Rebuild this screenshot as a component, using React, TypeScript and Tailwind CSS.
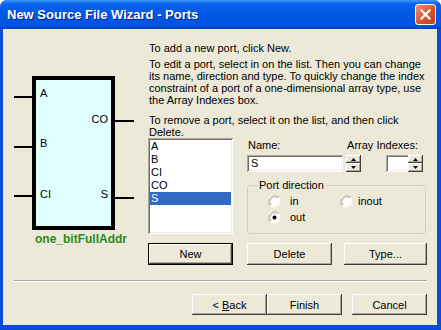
import React from 'react';

const raised = 'bg-[#ECE9D8] shadow-[inset_-1px_-1px_0_#404040,inset_1px_1px_0_#ffffff,inset_-2px_-2px_0_#aca899]';
const sunken = 'shadow-[inset_1px_1px_0_#aca899,inset_-1px_-1px_0_#ffffff,inset_2px_2px_0_#716f64,inset_-2px_-2px_0_#f1efe2]';

const Button: React.FC<{ w: string; h?: string; isDefault?: boolean; children: React.ReactNode }> = ({ w, h = 'h-[22px]', isDefault, children }) => (
  <div className={`${w} ${h} ${isDefault ? 'border border-black' : ''} flex`}>
    <div className={`flex-1 ${raised} flex items-center justify-center text-[11px] text-black`}>{children}</div>
  </div>
);

const Arrow = ({ up }: { up?: boolean }) => (
  <svg width="5" height="3" viewBox="0 0 5 3">
    <path d={up ? 'M2.5 0 L5 3 L0 3 Z' : 'M0 0 L5 0 L2.5 3 Z'} fill="#000" />
  </svg>
);

const Spin = () => (
  <div className="flex flex-col w-[15px] h-[17px]">
    <div className={`h-[8px] ${raised} flex items-center justify-center`}><Arrow up /></div>
    <div className={`h-[9px] ${raised} flex items-center justify-center`}><Arrow /></div>
  </div>
);

const Radio = ({ checked }: { checked?: boolean }) => (
  <svg width="13" height="13" viewBox="0 0 13 13">
    <circle cx="6.5" cy="6.5" r="6" fill="#fff" />
    <path d="M2.3 10.7 A6 6 0 0 1 10.7 2.3" stroke="#a0a0a0" strokeWidth="1" fill="none" />
    <path d="M3.2 9.8 A4.7 4.7 0 0 1 9.8 3.2" stroke="#d4d0c8" strokeWidth="1" fill="none" />
    <path d="M10.7 2.3 A6 6 0 0 1 2.3 10.7" stroke="#f4f3ee" strokeWidth="1" fill="none" />
    {checked && <circle cx="6.5" cy="6.5" r="2" fill="#000" />}
  </svg>
);

// schematic symbol of the entity
const Symbol = () => (
  <svg width="145" height="236" viewBox="0 0 145 236" className="shrink-0">
    <rect x="31" y="49" width="79" height="150" fill="#E0FFFF" stroke="#000" strokeWidth="4" />
    <g stroke="#000" strokeWidth="2">
      <line x1="11" y1="68" x2="29" y2="68" />
      <line x1="11" y1="118" x2="29" y2="118" />
      <line x1="11" y1="167" x2="29" y2="167" />
      <line x1="112" y1="92" x2="131" y2="92" />
      <line x1="112" y1="169" x2="131" y2="169" />
    </g>
    <g fontFamily="'Liberation Sans', Arial, sans-serif" fontSize="11" fill="#000">
      <text x="37" y="68">A</text>
      <text x="37" y="118">B</text>
      <text x="37" y="169">CI</text>
      <text x="105" y="94" textAnchor="end">CO</text>
      <text x="105" y="169" textAnchor="end">S</text>
    </g>
    <text x="32" y="214" fontFamily="'Liberation Sans', Arial, sans-serif" fontSize="12" fontWeight="bold" fill="#2A8A21">one_bitFullAddr</text>
  </svg>
);

export default function App() {
  const ports = ['A', 'B', 'CI', 'CO', 'S'];
  return (
    <div className="w-[441px] h-[330px] bg-[#0A4BD8] rounded-t-[7px] overflow-hidden flex flex-col font-['Liberation_Sans',Arial,sans-serif]">
      {/* Title bar */}
      <div className="h-[29px] shrink-0 flex items-center pl-[7px] pr-[5px] bg-[linear-gradient(to_bottom,#3D95FF_0%,#0A62EB_14%,#0058E6_50%,#0053DF_88%,#0040C8_100%)]">
        <span className="flex-1 text-white font-bold text-[13px] leading-none text-shadow-[1px_1px_0_#0a1e8c]">New Source File Wizard - Ports</span>
        <div className="w-[21px] h-[21px] rounded-[3px] border border-white bg-[linear-gradient(to_bottom_right,#F0906E,#D9532E_55%,#C23D1E)] flex items-center justify-center">
          <svg width="11" height="11" viewBox="0 0 11 11">
            <path d="M1.5 1.5 L9.5 9.5 M9.5 1.5 L1.5 9.5" stroke="#fff" strokeWidth="2.2" strokeLinecap="square" />
          </svg>
        </div>
      </div>

      {/* Body */}
      <div className="flex-1 ml-[3px] mr-[4px] mb-[5px] bg-[#ECE9D8] flex flex-col text-[11px] leading-[12px] text-black">
        <div className="flex">
          <Symbol />
          <div className="flex flex-col pt-[13px]">
            <div className="pl-[1px] whitespace-nowrap">
              <p>To add a new port, click New.</p>
              <p className="mt-[4px]">
                To edit a port, select in on the list. Then you can change<br />
                its name, direction and type. To quickly change the index<br />
                constraint of a port of a one-dimensional array type, use<br />
                the Array Indexes box.
              </p>
              <p className="mt-[8px]">
                To remove a port, select it on the list, and then click<br />
                Delete.
              </p>
            </div>

            <div className="flex gap-[14px]">
              {/* Port list */}
              <div className={`w-[85px] h-[96px] bg-white p-[2px] ${sunken}`}>
                {ports.map(p => (
                  <div key={p} className={`h-[13px] leading-[13px] pl-[1px] ${p === 'S' ? 'bg-[#316AC5] text-white' : ''}`}>{p}</div>
                ))}
              </div>

              {/* Port properties */}
              <div className="w-[180px] flex flex-col">
                <div className="flex justify-between pl-[1px] pr-[9px] mt-[1px]">
                  <span>Name:</span>
                  <span>Array Indexes:</span>
                </div>
                <div className="flex mt-[4px] h-[17px]">
                  <div className={`w-[96px] bg-white ${sunken} pl-[4px] leading-[17px]`}>S</div>
                  <div className="ml-[3px]"><Spin /></div>
                  <div className={`ml-[25px] w-[37px] bg-white ${sunken} flex justify-end p-[1px]`}>
                    <div className="-my-[1px] -mr-[1px]"><Spin /></div>
                  </div>
                </div>
                <fieldset className="mt-[7px] w-[179px] border border-[#D0D0BF] rounded-[3px] pl-[9px] pt-[3px] pb-[9px]">
                  <legend className="px-[2px] leading-[12px]">Port direction</legend>
                  <div className="grid grid-cols-[72px_auto] gap-y-[2px] pl-[11px]">
                    <div className="flex items-center h-[14px]"><Radio /><span className="ml-[9px]">in</span></div>
                    <div className="flex items-center h-[14px]"><Radio /><span className="ml-[5px]">inout</span></div>
                    <div className="flex items-center h-[14px]"><Radio checked /><span className="ml-[9px]">out</span></div>
                  </div>
                </fieldset>
              </div>
            </div>

            <div className="flex mt-[9px]">
              <Button w="w-[85px]" isDefault>New</Button>
              <div className="ml-[14px]"><Button w="w-[85px]">Delete</Button></div>
              <div className="ml-[12px]"><Button w="w-[83px]">Type...</Button></div>
            </div>
          </div>
        </div>

        {/* Separator */}
        <div className="mt-[15px] ml-[11px] mr-[10px] h-[2px] border-t border-[#ACA899] border-b border-b-white" />

        {/* Wizard buttons */}
        <div className="flex justify-end mt-[12px] pr-[10px]">
          <Button w="w-[75px]" h="h-[21px]">&lt; <u className="ml-[3px]">B</u>ack</Button>
          <Button w="w-[75px]" h="h-[21px]">Finish</Button>
          <div className="ml-[10px]"><Button w="w-[75px]" h="h-[21px]">Cancel</Button></div>
        </div>
      </div>
    </div>
  );
}
